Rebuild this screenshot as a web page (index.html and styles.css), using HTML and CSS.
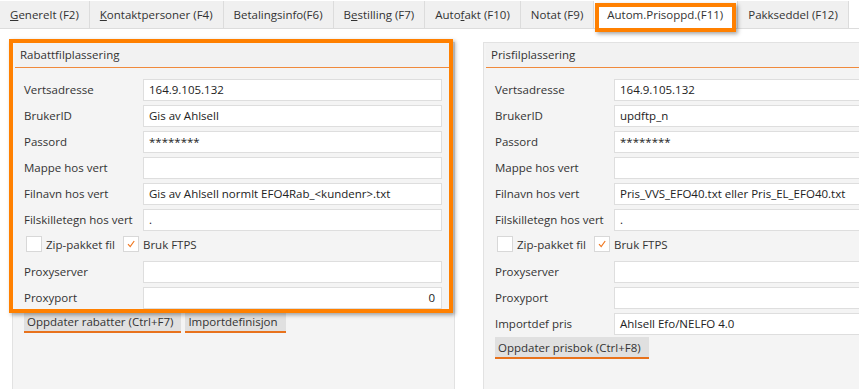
FILE: index.html
```html
<!DOCTYPE html>
<html>
<head>
    <meta charset="utf-8" />
    <title>Autom.Prisoppd.</title>
    <link rel="stylesheet" href="styles.css">
</head>
<body>
    <nav class="tabs">
        <div class="tab"><u>G</u>enerelt (F2)</div>
        <div class="tab"><u>K</u>ontaktpersoner (F4)</div>
        <div class="tab">Betalingsinfo(F6)</div>
        <div class="tab">B<u>e</u>stilling (F7)</div>
        <div class="tab">Auto<u>f</u>akt (F10)</div>
        <div class="tab">Notat (F9)</div>
        <div class="tab aktiv">Autom.Prisoppd.(F11)<span class="markering"></span></div>
        <div class="tab">Pakkseddel (F12)</div>
    </nav>

    <main class="innhold">
        <section class="panel">
            <div class="markering venstre"></div>
            <div class="gruppe-tittel">Rabattfilplassering</div>
            <div class="skjema">
                <label>Vertsadresse</label><div class="felt">164.9.105.132</div>
                <label>BrukerID</label><div class="felt">Gis av Ahlsell</div>
                <label>Passord</label><div class="felt">********</div>
                <label>Mappe hos vert</label><div class="felt"></div>
                <label>Filnavn hos vert</label><div class="felt">Gis av Ahlsell normlt EFO4Rab_&lt;kundenr&gt;.txt</div>
                <label>Filskilletegn hos vert</label><div class="felt">.</div>
                <div class="valg">
                    <span class="boks"></span>Zip-pakket fil
                    <span class="boks"><svg width="10" height="10" viewBox="0 0 10 10"><path d="M2 5.2 L4.2 7.6 L8.2 2" fill="none" stroke="#f07820" stroke-width="1.2"/></svg></span>Bruk FTPS
                </div>
                <label>Proxyserver</label><div class="felt"></div>
                <label>Proxyport</label><div class="felt tall">0</div>
            </div>
            <div class="knapper">
                <button class="knapp">Oppdater rabatter (Ctrl+F7)</button>
                <button class="knapp">Importdefinisjon</button>
            </div>
        </section>

        <section class="panel">
            <div class="gruppe-tittel">Prisfilplassering</div>
            <div class="skjema">
                <label>Vertsadresse</label><div class="felt">164.9.105.132</div>
                <label>BrukerID</label><div class="felt">updftp_n</div>
                <label>Passord</label><div class="felt">********</div>
                <label>Mappe hos vert</label><div class="felt"></div>
                <label>Filnavn hos vert</label><div class="felt">Pris_VVS_EFO40.txt eller Pris_EL_EFO40.txt</div>
                <label>Filskilletegn hos vert</label><div class="felt">.</div>
                <div class="valg">
                    <span class="boks"></span>Zip-pakket fil
                    <span class="boks"><svg width="10" height="10" viewBox="0 0 10 10"><path d="M2 5.2 L4.2 7.6 L8.2 2" fill="none" stroke="#f07820" stroke-width="1.2"/></svg></span>Bruk FTPS
                </div>
                <label>Proxyserver</label><div class="felt"></div>
                <label>Proxyport</label><div class="felt"></div>
                <label>Importdef pris</label><div class="felt">Ahlsell Efo/NELFO 4.0</div>
            </div>
            <div class="knapper">
                <button class="knapp">Oppdater prisbok (Ctrl+F8)</button>
            </div>
        </section>
    </main>
</body>
</html>
```

FILE: styles.css
```css
* {
    box-sizing: border-box;
}

html, body {
    margin: 0;
    height: 100%;
    overflow: hidden;
    background-color: #ffffff;
    font-family: 'Open Sans', 'Noto Sans', sans-serif;
    font-size: 11.5px;
    color: #333333;
}

.tabs {
    display: flex;
    height: 29px;
    padding-top: 1px;
    border-bottom: 1px solid #dcdcdc;
}

.tab {
    position: relative;
    height: 27px;
    line-height: 27px;
    padding: 0 10px 0 10px;
    background-color: #f0f0f0;
    border-right: 1px solid #dcdcdc;
    white-space: nowrap;
}

.tab.aktiv {
    padding: 0 14px 0 13px;
    background-color: #ffffff;
}

.markering {
    position: absolute;
    border: 4px solid #ff8000;
    box-shadow: 2px 2px 4px rgba(0, 0, 0, 0.35);
    pointer-events: none;
    z-index: 2;
}

.tab .markering {
    left: 1px;
    top: 2px;
    right: 1px;
    bottom: -4px;
}

.markering.venstre {
    left: -4px;
    top: -4px;
    width: 444px;
    height: 274px;
}

.innhold {
    display: flex;
    gap: 28px;
    padding: 13px 0 0 12px;
}

.panel {
    position: relative;
    flex: none;
    width: 443px;
    height: 360px;
    background-color: #f4f4f4;
    border: 1px solid #e2e2e2;
}

.gruppe-tittel {
    height: 25px;
    line-height: 24px;
    margin: 0 2px;
    padding-left: 5px;
    background-color: #f2f2f2;
    border-bottom: 1px solid #f08a3c;
}

.skjema {
    display: grid;
    grid-template-columns: 119px 299px;
    grid-auto-rows: 22px;
    row-gap: 4px;
    padding: 11px 0 0 11px;
}

.skjema label {
    line-height: 22px;
    white-space: nowrap;
}

.felt {
    height: 22px;
    line-height: 20px;
    padding: 0 5px;
    background-color: #ffffff;
    border: 1px solid #dedede;
    color: #222222;
    white-space: nowrap;
    overflow: hidden;
}

.felt.tall {
    text-align: right;
    padding-right: 6px;
}

.valg {
    grid-column: 1 / 3;
    display: flex;
    align-items: center;
    height: 20px;
    margin-top: -1px;
    padding-left: 2px;
}

.boks {
    display: inline-flex;
    align-items: center;
    justify-content: center;
    width: 16px;
    height: 16px;
    margin-right: 4px;
    background-color: #ffffff;
    border: 1px solid #d8d8d8;
}

.valg .boks:nth-of-type(2) {
    margin-left: 8px;
}

.knapper {
    display: flex;
    gap: 4px;
    padding: 2px 0 0 11px;
}

.knapp {
    height: 22px;
    padding: 0 8px 0 3px;
    text-align: left;
    font-family: inherit;
    font-size: inherit;
    font-weight: normal;
    color: #333333;
    background-color: #e0e0e0;
    border: none;
    border-bottom: 2px solid #e8721c;
    cursor: pointer;
}
```
